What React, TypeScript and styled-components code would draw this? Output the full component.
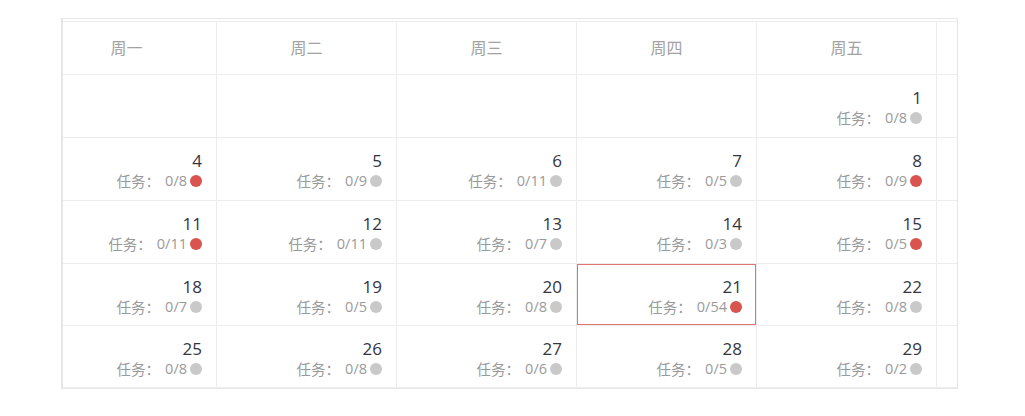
import React from "react";
import styled, { createGlobalStyle, css } from "styled-components";

const Global = createGlobalStyle`
  html, body { margin: 0; padding: 0; background: #ffffff; }
  body { font-family: "Open Sans", "Noto Sans CJK SC", sans-serif; }
`;

const Page = styled.div`
  padding: 18px 0 0 61px;
  width: 897px;
`;

const Frame = styled.div`
  border: 1px solid #e6e6e6;
  border-left-width: 2px;
  padding-top: 2px;
  padding-bottom: 1px;
  overflow: hidden;
  box-sizing: border-box;
  width: 897px;
  height: 371px;
`;

const Table = styled.div`
  margin-left: -26px;
  display: grid;
  grid-template-columns: repeat(6, 180px);
  grid-template-rows: 53px repeat(3, 63px) 62px 62px;
  border-top: 1px solid #eeeeee;
  width: ${180 * 6}px;
`;

const HeadCell = styled.div`
  display: flex;
  align-items: center;
  justify-content: center;
  border-right: 1px solid #ededed;
  border-bottom: 1px solid #ededed;
  color: #a2a2a2;
  font-size: 16px;
  font-family: "Noto Sans CJK SC", sans-serif;
  padding-bottom: 3px;
  box-sizing: border-box;
`;

const DayCell = styled.div<{ $selected?: boolean }>`
  display: flex;
  flex-direction: column;
  align-items: flex-end;
  padding: 12px 14px 0 0;
  border-right: 1px solid #ededed;
  border-bottom: 1px solid #ededed;
  box-sizing: border-box;
  ${(p) =>
    p.$selected &&
    css`
      box-shadow: inset 0 0 0 1px #e27272;
    `}
`;

const DayNum = styled.div`
  font-size: 17px;
  line-height: 22px;
  color: #35353f;
`;

const Task = styled.div`
  display: flex;
  align-items: center;
  font-size: 14px;
  line-height: 18px;
  color: #9a9a9a;
  font-family: "Open Sans", "Noto Sans CJK SC", sans-serif;
`;

const Label = styled.span`
  font-family: "Noto Sans CJK SC", sans-serif;
  font-size: 14.5px;
  margin-right: 5px;
`;

const Count = styled.span`
  font-size: 14.5px;
`;

const Dot = styled.span<{ $red?: boolean }>`
  display: inline-block;
  width: 12px;
  height: 12px;
  border-radius: 50%;
  margin-left: 3px;
  background: ${(p) => (p.$red ? "#d9534f" : "#c9c9c9")};
`;

type Day = { d: number; t: string; red?: boolean; sel?: boolean } | null;

const heads = ["周一", "周二", "周三", "周四", "周五", ""];

const weeks: Day[][] = [
  [null, null, null, null, { d: 1, t: "0/8" }, null],
  [
    { d: 4, t: "0/8", red: true },
    { d: 5, t: "0/9" },
    { d: 6, t: "0/11" },
    { d: 7, t: "0/5" },
    { d: 8, t: "0/9", red: true },
    null,
  ],
  [
    { d: 11, t: "0/11", red: true },
    { d: 12, t: "0/11" },
    { d: 13, t: "0/7" },
    { d: 14, t: "0/3" },
    { d: 15, t: "0/5", red: true },
    null,
  ],
  [
    { d: 18, t: "0/7" },
    { d: 19, t: "0/5" },
    { d: 20, t: "0/8" },
    { d: 21, t: "0/54", red: true, sel: true },
    { d: 22, t: "0/8" },
    null,
  ],
  [
    { d: 25, t: "0/8" },
    { d: 26, t: "0/8" },
    { d: 27, t: "0/6" },
    { d: 28, t: "0/5" },
    { d: 29, t: "0/2" },
    null,
  ],
];

export default function App() {
  return (
    <>
      <Global />
      <Page>
        <Frame>
          <Table>
            {heads.map((h, i) => (
              <HeadCell key={i}>{h}</HeadCell>
            ))}
            {weeks.flatMap((w, wi) =>
              w.map((day, di) =>
                day ? (
                  <DayCell key={`${wi}-${di}`} $selected={day.sel}>
                    <DayNum>{day.d}</DayNum>
                    <Task>
                      <Label>任务：</Label>
                      <Count>{day.t}</Count>
                      <Dot $red={day.red} />
                    </Task>
                  </DayCell>
                ) : (
                  <DayCell key={`${wi}-${di}`} />
                )
              )
            )}
          </Table>
        </Frame>
      </Page>
    </>
  );
}
